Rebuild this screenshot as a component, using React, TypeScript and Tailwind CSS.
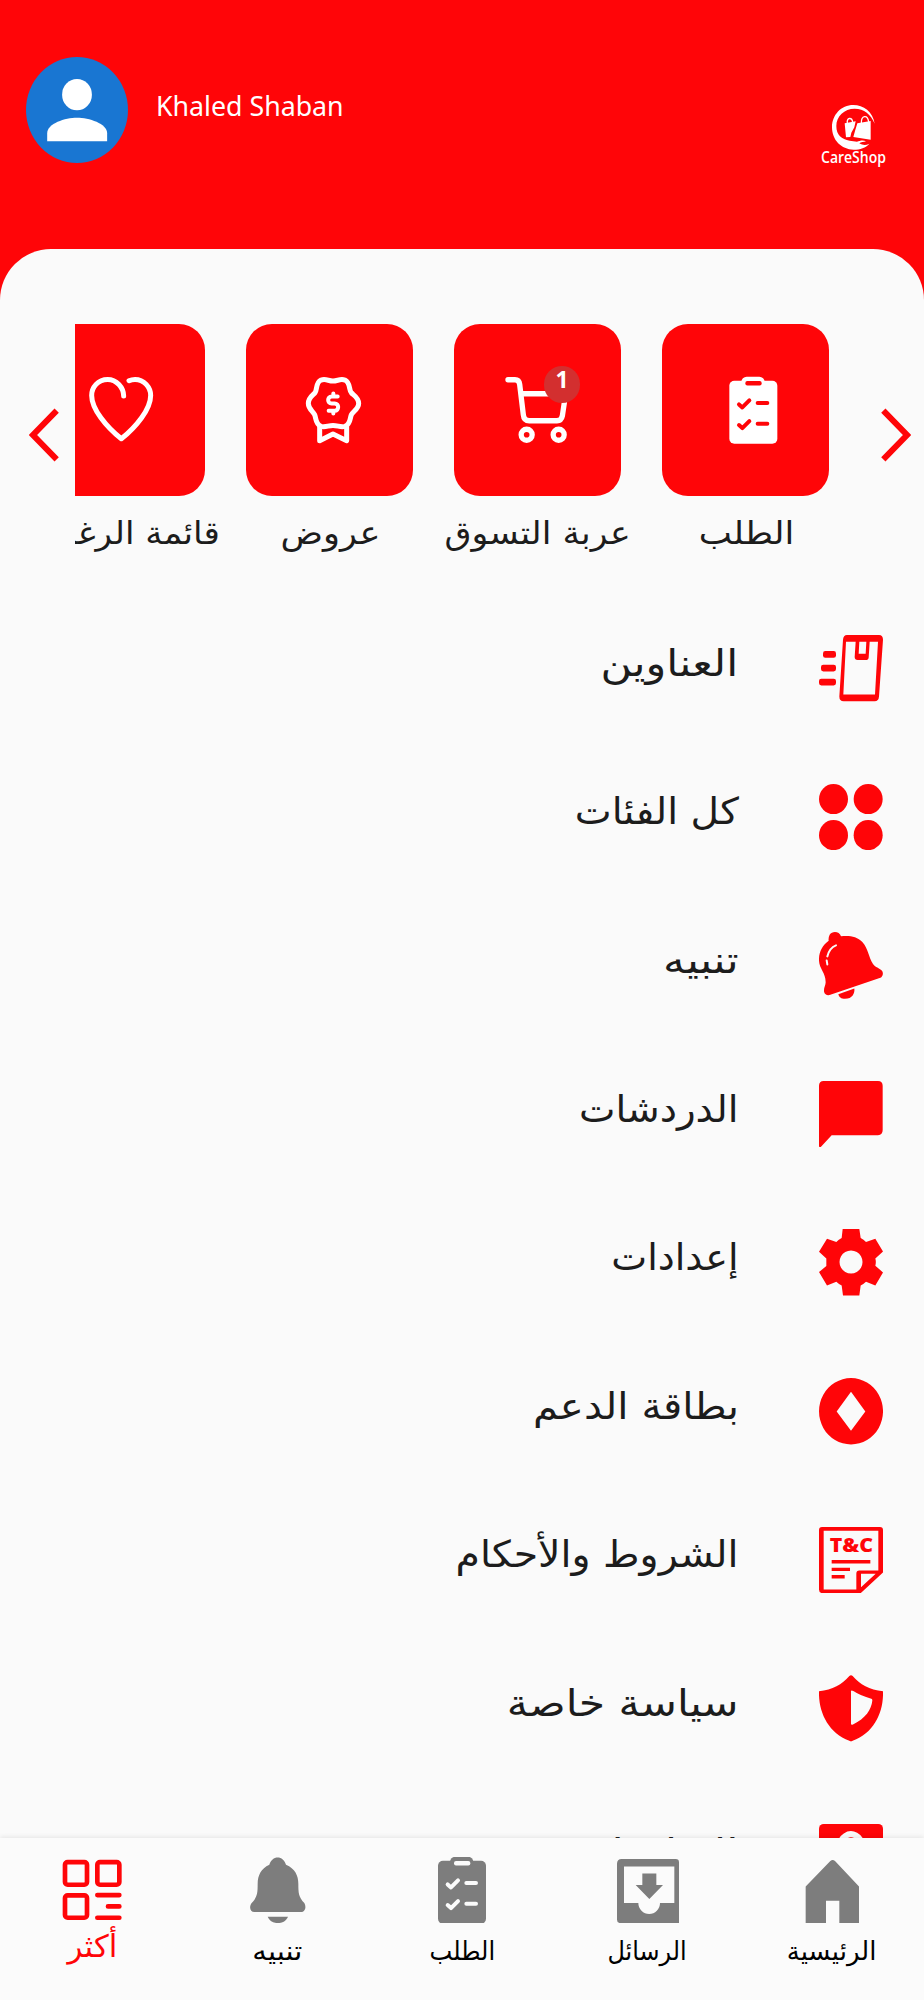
import type { ReactNode } from 'react';
import clsx from 'clsx';

const RED = '#ff0508';
const PAPER = '#fafafa';

function Clipboard({ fill, hole }: { fill: string; hole: string }) {
  return (
    <>
      <rect x="202" y="170" width="144" height="189" rx="15" fill={fill} />
      <rect x="238" y="158" width="70" height="34" rx="16" fill={fill} />
      <rect x="250" y="171" width="49" height="13" rx="6" fill={hole} />
      <g fill="none" stroke={hole} strokeWidth="12" strokeLinecap="round" strokeLinejoin="round">
        <path d="M231 241l10 9 21-21M231 303l10 9 21-21" />
        <path d="M287 237h29M287 299h29" />
      </g>
    </>
  );
}

function Logo() {
  return (
    <svg viewBox="0 0 195 183" className="h-[61px] w-[65px] overflow-visible" fill="#fff">
      <path d="M161 56C156 20 127 0 97 0 60 0 33 30 33 67c0 38 28 67 65 67 20 0 36-6 47-18-11 5-19 5-30-1 4-4 14-4 20-6-8-5-19-2-27 1l-22-3C62 103 46 90 46 63 46 34 70 11 101 11c28 0 49 17 60 45z" />
      <path d="M71 55l33-6-4 18-9 16-3 13-13 1zM109 55l40-7v56l-52-8 5-18z" />
      <g fill="none" stroke="#fff" strokeWidth="4">
        <path d="M79 56c-3-20 14-20 16-4M121 56c-1-27 19-27 22-5" />
      </g>
      <text x="0" y="173" textLength="195" lengthAdjust="spacingAndGlyphs" fontSize="47" fontWeight="600" fontFamily="'Open Sans', sans-serif">
        CareShop
      </text>
    </svg>
  );
}

function Chevron({ flip }: { flip?: boolean }) {
  return (
    <svg viewBox="0 0 90 162" className={clsx('mt-[84px] h-[54px] w-[30px] shrink-0', flip && '-scale-x-100')}>
      <path d="M7 8l71 73L7 154" fill="none" stroke={RED} strokeWidth="18" />
    </svg>
  );
}

type Shortcut = { label: string; fit: string; badge?: number; icon: ReactNode };

const shortcuts: Shortcut[] = [
  { label: 'الطلب', fit: 'scale-x-[1.1]', icon: <Clipboard fill="#fff" hole={RED} /> },
  {
    label: 'عربة التسوق',
    fit: 'scale-x-[1.087]',
    badge: 1,
    icon: (
      <g fill="none" stroke="#fff" strokeWidth="16" strokeLinecap="round">
        <path d="M162 167h21c9 0 13 5 14 14l11 91c1 12 6 18 18 18h83c9 0 14-4 16-14l10-67H203" />
        <circle cx="218" cy="332" r="16.5" />
        <circle cx="314" cy="332" r="16.5" />
      </g>
    ),
  },
  {
    label: 'عروض',
    fit: 'scale-x-[1.1]',
    icon: (
      <g fill="none" stroke="#fff" strokeWidth="15" strokeLinecap="round" strokeLinejoin="round">
        <path d="M261 171C275 171 282 163 297 168C314 176 308 198 316 206C322 213 338 220 338 238C338 255 320 262 316 272C311 284 314 300 297 307C283 311 276 304 261 304C246 304 239 311 225 307C208 300 211 284 206 272C202 262 187 255 187 238C187 220 202 213 207 206C214 198 208 176 225 168C240 163 247 171 261 171Z" />
        <path d="M221 309v41l40-20 41 20v-41" />
        <path d="M275 217h-18c-14 0-14 21 0 21h9c14 0 14 22 0 22h-18M262 208v8M262 261v7" strokeWidth="12" />
      </g>
    ),
  },
  {
    label: 'قائمة الرغبات',
    fit: 'scale-x-[1.07]',
    icon: (
      <path
        d="M257 216C257 190 235 166 209 166C180 166 161 190 161 214C161 255 205 308 250 344C295 308 338 255 338 214C338 190 318 166 291 166C285 166 279 167 273 170"
        fill="none"
        stroke="#fff"
        strokeWidth="15"
        strokeLinecap="round"
        strokeLinejoin="round"
      />
    ),
  },
];

type Row = { label: string; fit: string; icon: ReactNode };

const rows: Row[] = [
  {
    label: 'العناوين',
    fit: 'scale-x-[1.164]',
    icon: (
      <>
        <path
          fillRule="evenodd"
          d="M84 0h96q12 0 12 14l-12 170q-1 14-13 14H74q-13 0-13-14L72 14Q73 0 84 0zM81 20l-8 158h95l9-158h-25l-3 47q-1 8-9 8h-24q-9 0-9-9l3-46zM121 20l-2 36h21l2-36z"
        />
        <rect x="12" y="48" width="39" height="20" rx="7" />
        <rect x="6" y="89" width="45" height="20" rx="7" />
        <rect x="0" y="131" width="51" height="20" rx="7" />
      </>
    ),
  },
  {
    label: 'كل الفئات',
    fit: 'scale-x-[1.06]',
    icon: (
      <>
        <ellipse cx="43.5" cy="45" rx="43.5" ry="45" />
        <ellipse cx="147.5" cy="45" rx="43.5" ry="45" />
        <ellipse cx="43.5" cy="153" rx="43.5" ry="45" />
        <ellipse cx="147.5" cy="153" rx="43.5" ry="45" />
      </>
    ),
  },
  {
    label: 'تنبيه',
    fit: 'scale-x-[1.187]',
    icon: (
      <>
        <path d="M29 26C10 40-1 60 0 86c1 24 20 36 20 64 0 10-6 15-5 28 2 10 11 13 19 10l148-50c10-4 12-16 7-22-9-9-19-9-27-20-14-22-14-46-32-66C114 13 90 10 66 13 62-2 40-4 32 8c-3 6-4 12-3 18z" />
        <path d="M58 186l48-17c2 14-6 31-28 31-12 0-18-6-20-14z" />
        <path d="M51 40Q31 48 25 73M23 85l2 12" fill="none" stroke={PAPER} strokeWidth="6" strokeLinecap="round" />
      </>
    ),
  },
  {
    label: 'الدردشات',
    fit: 'scale-x-[1.046]',
    icon: <path d="M14 0h163q14 0 14 14v133q0 15-14 15H38L6 197q-6 4-6-4V14Q0 0 14 0z" />,
  },
  {
    label: 'إعدادات',
    fit: 'scale-x-[1.03]',
    icon: (
      <path
        fillRule="evenodd"
        d="M71 0h50l4 27q9 4 16 12l28-10 23 38-23 21q3 11 0 22l23 20-23 39-28-11q-7 7-16 11l-4 30H72l-4-30q-9-4-16-11l-28 11-24-40 22-18V88L0 68l24-39 28 10q7-8 16-12zM96 64a34.500 34.500 0 1 0 .1 0z"
      />
    ),
  },
  {
    label: 'بطاقة الدعم',
    fit: 'scale-x-[1.09]',
    icon: <path fillRule="evenodd" d="M96 0a96 99.500 0 1 0 .1 0zM96 41l43 59-43 58-43-58z" />,
  },
  {
    label: 'الشروط والأحكام',
    fit: 'scale-x-[1.066]',
    icon: (
      <>
        <path
          fillRule="evenodd"
          d="M9 0h174q9 0 9 9v127l-67 62H11q-11 0-11-11V9Q0 0 9 0zM14 11v176h98v-48q0-9 9-9h57V11zM126 140v40l44-40z"
        />
        <path d="M38 99h116v10H38zM38 122h55v10H38zM38 144h39v10H38z" />
        <text x="32" y="74" textLength="130" lengthAdjust="spacingAndGlyphs" fontSize="59" fontWeight="800" fontFamily="'Open Sans', sans-serif">
          T&amp;C
        </text>
      </>
    ),
  },
  {
    label: 'سياسة خاصة',
    fit: 'scale-x-[1.15]',
    icon: (
      <path
        fillRule="evenodd"
        d="M91 3q5-5 10 0c22 26 50 41 91 46 2 62-26 124-91 148q-5 3-10 0C27 173-2 111 0 49 41 44 69 29 91 3zM96 49v96q0 6 6 3c38-19 55-44 58-72q0-4-3-5-33-9-54-23-7-4-7 1z"
      />
    ),
  },
  {
    label: 'التعليمات',
    fit: 'scale-x-[1.19]',
    icon: (
      <>
        <rect width="192" height="198" rx="14" />
        <path d="M64 65a32 35 0 1 1 52 28q-20 14-20 36" fill="none" stroke={PAPER} strokeWidth="18" />
      </>
    ),
  },
];

type Tab = { label: string; fit: string; active?: boolean; icon: ReactNode };

const tabs: Tab[] = [
  { label: 'الرئيسية', fit: 'scale-x-100', icon: <path d="M91 12q7-7 14 0l72 76v110h-59v-67H78v67H17V88z" /> },
  {
    label: 'الرسائل',
    fit: 'scale-x-[0.92]',
    icon: (
      <path
        fillRule="evenodd"
        d="M20 6h162q10 0 10 10v182H16q-10 0-10-10V20Q6 6 20 6zM27 28v110h43a32.500 33 0 0 0 65 0h43V28zM82 49h42v35h20l-41 42-41-42h20z"
      />
    ),
  },
  {
    label: 'الطلب',
    fit: 'scale-x-[0.93]',
    icon: (
      <g transform="translate(-178 -159)">
        <Clipboard fill="#7d7d7d" hole="#fbfbfb" />
      </g>
    ),
  },
  {
    label: 'تنبيه',
    fit: 'scale-x-[1.12]',
    icon: (
      <>
        <path d="M98 1c11 0 21 8 25 22 27 12 37 32 37 57 0 28 1 40 18 58 7 12 2 27-10 27H28c-12 0-17-15-8-27 17-18 18-30 18-58 0-25 10-45 35-57C77 9 87 1 98 1z" />
        <path d="M68 179h61c-5 11-14 19-31 19-16 0-25-8-30-19z" />
      </>
    ),
  },
  {
    label: 'أكثر',
    fit: 'scale-x-100',
    active: true,
    icon: (
      <g fill="none" stroke={RED} strokeWidth="14" strokeLinecap="round">
        <rect x="15" y="15" width="66" height="68" rx="8" />
        <rect x="112" y="15" width="66" height="68" rx="8" />
        <rect x="15" y="115" width="66" height="67" rx="8" />
        <path d="M112 114h66M144 148h34M112 182h66" />
      </g>
    ),
  },
];

export default function App() {
  return (
    <div dir="rtl" className="flex h-[2000px] w-[924px] flex-col overflow-hidden bg-[#ff0508] font-['DejaVu_Sans',sans-serif] text-[#1c1c1c]">
      <header dir="ltr" className="flex h-[249px] shrink-0 items-start justify-between pl-[26px] pr-[38px]">
        <div className="flex items-start gap-[28px] pt-[57px]">
          <svg viewBox="0 0 308 318" preserveAspectRatio="none" className="h-[106px] w-[102px]">
            <ellipse cx="154" cy="159" rx="154" ry="159" fill="#1976d2" />
            <ellipse cx="154" cy="113" rx="45" ry="47" fill="#fff" />
            <path d="M64 253v-24c0-30 54-47 90-47s91 17 91 47v24z" fill="#fff" />
          </svg>
          <p className="origin-left scale-x-[0.955] pt-[28px] font-['Noto_Sans',sans-serif] text-[28px] leading-[40px] text-white">
            Khaled Shaban
          </p>
        </div>
        <div className="pt-[105px]">
          <Logo />
        </div>
      </header>

      <main className="flex min-h-0 flex-1 flex-col overflow-hidden rounded-t-[51px] bg-[#fafafa]">
        <section className="flex h-[345px] shrink-0 items-start pr-[13px] pt-[74.500px]">
          <div className="ml-[31.500px]">
            <Chevron />
          </div>
          {/* Horizontal list, the fourth card runs out of view */}
          <div className="flex w-[775px] shrink-0 overflow-hidden">
            {shortcuts.map((s) => (
              <div key={s.label} className="flex w-[208px] shrink-0 flex-col items-center">
                <div className="relative h-[172.500px] w-[167px] rounded-[26px] bg-[#ff0508]">
                  <svg viewBox="0 0 501 517" className="size-full">
                    {s.icon}
                  </svg>
                  {s.badge && (
                    <span className="absolute left-[90px] top-[42px] flex h-[37px] w-[36px] justify-center rounded-full bg-[#d32f2f] font-['Noto_Sans',sans-serif] text-[23px] font-bold leading-[27px] text-white">
                      {s.badge}
                    </span>
                  )}
                </div>
                <span className={clsx('whitespace-nowrap pl-px pt-[13px] text-[32px] leading-[48px]', s.fit)}>{s.label}</span>
              </div>
            ))}
          </div>
          <div className="mr-[15.500px]">
            <Chevron flip />
          </div>
        </section>

        <ul>
          {rows.map((r) => (
            <li key={r.label} className="flex h-[148.600px] items-center gap-[80px] pr-[41.500px]">
              <svg
                viewBox="0 0 192 199"
                preserveAspectRatio="none"
                className="h-[66.500px] w-[64px] shrink-0 [direction:ltr]"
                fill={RED}
              >
                {r.icon}
              </svg>
              <span className={clsx('origin-right whitespace-nowrap pb-[9px] text-[37px] leading-[50px]', r.fit)}>{r.label}</span>
            </li>
          ))}
        </ul>
      </main>

      <nav className="z-10 flex h-[162.500px] shrink-0 bg-[#fbfbfb] pt-[19px] shadow-[0_-1px_5px_rgba(0,0,0,0.09)]">
        {tabs.map((t) => (
          <div key={t.label} className="flex flex-1 flex-col items-center">
            <svg viewBox="0 0 192 199" className="h-[66.500px] w-[64px] shrink-0" fill="#7d7d7d">
              {t.icon}
            </svg>
            <span
              className={clsx(
                'whitespace-nowrap leading-[40px]',
                t.active ? 'pt-[3px] text-[31px] text-[#ff0508]' : 'pt-[8px] text-[26px] text-black',
                t.fit,
              )}
            >
              {t.label}
            </span>
          </div>
        ))}
      </nav>
    </div>
  );
}
